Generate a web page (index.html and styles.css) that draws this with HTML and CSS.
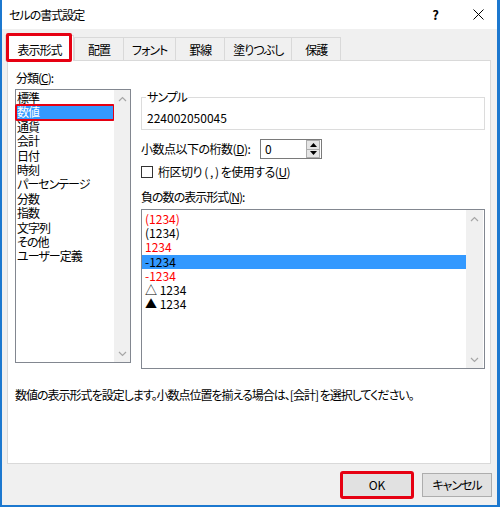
FILE: index.html
```html
<!DOCTYPE html>
<html lang="ja">
<head>
<meta charset="utf-8">
<title>セルの書式設定</title>
<link rel="stylesheet" href="styles.css">
</head>
<body>
<div class="window">
  <div class="titlebar">
    <span class="title">セルの書式設定</span>
    <span class="help">?</span>
    <span class="close">
      <svg width="11" height="11" viewBox="0 0 11 11"><path d="M0.5 0.5 L10.5 10.5 M10.5 0.5 L0.5 10.5" stroke="#000" stroke-width="1" fill="none"/></svg>
    </span>
  </div>

  <div class="tabs">
    <div class="tab tab-active">表示形式</div>
    <div class="tab">配置</div>
    <div class="tab">フォント</div>
    <div class="tab">罫線</div>
    <div class="tab">塗りつぶし</div>
    <div class="tab">保護</div>
  </div>

  <div class="panel">
    <div class="columns">
      <div class="category">
        <div class="label">分類(<u>C</u>):</div>
        <div class="listbox category-list">
          <ul class="items">
            <li>標準</li>
            <li class="selected marked">数値</li>
            <li>通貨</li>
            <li>会計</li>
            <li>日付</li>
            <li>時刻</li>
            <li>パーセンテージ</li>
            <li>分数</li>
            <li>指数</li>
            <li>文字列</li>
            <li>その他</li>
            <li>ユーザー定義</li>
          </ul>
          <div class="scrollbar">
            <svg width="9" height="6" viewBox="0 0 9 6"><path d="M1 5 L4.5 1.5 L8 5" stroke="#a6a6a6" stroke-width="1.2" fill="none"/></svg>
            <svg width="9" height="6" viewBox="0 0 9 6"><path d="M1 1 L4.5 4.5 L8 1" stroke="#a6a6a6" stroke-width="1.2" fill="none"/></svg>
          </div>
        </div>
      </div>

      <div class="options">
        <fieldset class="sample">
          <legend>サンプル</legend>
          <div class="sample-value">224002050045</div>
        </fieldset>

        <div class="decimal-row">
          <span class="decimal-label">小数点以下の桁数(<u>D</u>):</span>
          <div class="spin">
            <span class="spin-value">0</span>
            <div class="spin-buttons">
              <span class="spin-btn"><svg width="7" height="4" viewBox="0 0 7 4"><path d="M0 4 L3.5 0 L7 4 Z" fill="#000"/></svg></span>
              <span class="spin-btn"><svg width="7" height="4" viewBox="0 0 7 4"><path d="M0 0 L3.5 4 L7 0 Z" fill="#000"/></svg></span>
            </div>
          </div>
        </div>

        <div class="check-row">
          <span class="checkbox"></span>
          <span>桁区切り ( , ) を使用する(<u>U</u>)</span>
        </div>

        <div class="label neg-label">負の数の表示形式(<u>N</u>):</div>
        <div class="listbox neg-list">
          <ul class="items">
            <li class="red">(1234)</li>
            <li>(1234)</li>
            <li class="red">1234</li>
            <li class="selected plain">-1234</li>
            <li class="red">-1234</li>
            <li>△ 1234</li>
            <li>▲ 1234</li>
          </ul>
          <div class="scrollbar">
            <svg width="9" height="6" viewBox="0 0 9 6"><path d="M1 5 L4.5 1.5 L8 5" stroke="#a6a6a6" stroke-width="1.2" fill="none"/></svg>
            <svg width="9" height="6" viewBox="0 0 9 6"><path d="M1 1 L4.5 4.5 L8 1" stroke="#a6a6a6" stroke-width="1.2" fill="none"/></svg>
          </div>
        </div>
      </div>
    </div>

    <p class="description">数値の表示形式を設定します。小数点位置を揃える場合は、[会計] を選択してください。</p>
  </div>

  <div class="footer">
    <button class="btn btn-default">OK</button>
    <button class="btn">キャンセル</button>
  </div>
</div>
</body>
</html>
```

FILE: styles.css
```css
html, body {
  margin: 0;
  padding: 0;
  background: #ffffff;
}

body {
  font-family: "Noto Sans CJK JP", "Noto Sans", sans-serif;
  font-size: 12px;
  font-feature-settings: "palt";
  letter-spacing: -1px;
  color: #000;
}

u {
  text-decoration: underline;
  text-underline-offset: 1px;
}

/* dialog frame */
.window {
  width: 500px;
  height: 507px;
  box-sizing: border-box;
  border-left: 2px solid #1c78cf;
  border-right: 3px solid #1c78cf;
  border-bottom: 2px solid #1c78cf;
  background: #f0f0f0;
  display: flex;
  flex-direction: column;
}

.titlebar {
  height: 29px;
  flex: none;
  background: #fff;
  display: flex;
  align-items: center;
  padding-left: 7px;
  line-height: 14px;
}

.title {
  flex: 1;
}

.help {
  font-weight: bold;
  font-size: 13px;
  margin-right: 35px;
}

.close {
  display: flex;
  margin-right: 13px;
}

/* tab strip */
.tabs {
  height: 31px;
  flex: none;
  display: flex;
  align-items: flex-end;
  padding-left: 5px;
}

.tab {
  height: 23px;
  box-sizing: border-box;
  min-width: 50px;
  padding: 2px 8px 0;
  margin-left: -1px;
  border: 1px solid #d9d9d9;
  border-bottom: none;
  background: #f0f0f0;
  line-height: 19px;
  text-align: center;
}

.tab-active {
  position: relative;
  z-index: 2;
  width: 69px;
  height: 26px;
  margin-left: -2px;
  margin-bottom: -1px;
  padding-top: 4px;
  background: #fff;
}

.tab-active::after {
  content: "";
  position: absolute;
  top: -3px;
  left: 0;
  right: 1px;
  bottom: -1px;
  border: 3px solid #e60012;
  border-radius: 2px;
}

.tab-active + .tab {
  margin-left: 0;
}

/* tab page */
.panel {
  height: 404px;
  flex: none;
  box-sizing: border-box;
  margin: 0 6px 0 5px;
  padding: 10px 5px 0 7px;
  border: 1px solid #d9d9d9;
  background: #fff;
}

.columns {
  display: flex;
  gap: 10px;
}

.label {
  line-height: 14px;
}

.category {
  width: 116px;
  flex: none;
}

.category .label {
  padding-left: 1px;
}

.listbox {
  box-sizing: border-box;
  border: 1px solid #828790;
  background: #fff;
  display: flex;
}

.category-list {
  height: 274px;
  margin-top: 4px;
}

.items {
  list-style: none;
  margin: 0;
  padding: 1px 0 0;
  flex: 1;
  min-width: 0;
}

.items li {
  height: 14.4px;
  line-height: 14.4px;
  padding-left: 1px;
  white-space: nowrap;
}

.items li.selected {
  background: #3399ff;
  color: #fff;
}

.items li.marked {
  outline: 2px solid #e60012;
  outline-offset: -1px;
  border-radius: 1px;
}

.scrollbar {
  width: 16px;
  flex: none;
  background: #f0f0f0;
  display: flex;
  flex-direction: column;
  justify-content: space-between;
  align-items: center;
  padding: 6px 0 5px;
  box-sizing: border-box;
}

.options {
  width: 344px;
  flex: none;
}

.sample {
  margin: 19px 0 0;
  padding: 7px 4px 4px;
  border: 1px solid #dcdcdc;
  min-width: 0;
}

.sample legend {
  padding: 0 1px;
  line-height: 14px;
}

.sample-value {
  line-height: 14px;
  padding-left: 1px;
  letter-spacing: 0;
}

.decimal-row {
  margin-top: 9px;
  height: 20px;
  display: flex;
  align-items: center;
}

.decimal-label {
  width: 119px;
  flex: none;
  line-height: 14px;
  letter-spacing: -0.5px;
}

.spin {
  width: 62px;
  height: 20px;
  box-sizing: border-box;
  border: 1px solid #7a7a7a;
  display: flex;
}

.spin-value {
  flex: 1;
  padding-left: 4px;
  line-height: 18px;
  letter-spacing: 0;
}

.spin-buttons {
  width: 14px;
  margin: 0 1px 0 0;
  display: flex;
  flex-direction: column;
}

.spin-btn {
  flex: 1;
  box-sizing: border-box;
  border: 1px solid #adadad;
  background: #e5e5e5;
  display: flex;
  align-items: center;
  justify-content: center;
}

.spin-btn + .spin-btn {
  border-top: none;
}

.check-row {
  margin-top: 6px;
  height: 14px;
  line-height: 14px;
  display: flex;
  align-items: center;
  letter-spacing: -0.5px;
}

.checkbox {
  width: 12px;
  height: 12px;
  box-sizing: border-box;
  border: 1px solid #333;
  background: #fff;
  margin-right: 5px;
}

.neg-label {
  margin-top: 11px;
}

.neg-list {
  height: 160px;
  margin-top: 5px;
}

.neg-list .items {
  padding-top: 2px;
  letter-spacing: 0;
}

.neg-list .items li {
  height: 14.2px;
  line-height: 14.2px;
  padding-left: 3px;
}

.neg-list .items li.red {
  color: #ff0000;
}

.neg-list .items li.plain {
  color: #000;
}

.neg-list .scrollbar {
  width: 17px;
  margin-right: 1px;
}

.description {
  margin: 19px 0 0;
  line-height: 14px;
}

/* button row */
.footer {
  flex: 1;
  display: flex;
  justify-content: flex-end;
  align-items: flex-start;
  gap: 10px;
  padding: 9px 5px 0 0;
}

.btn {
  width: 70px;
  height: 24px;
  box-sizing: border-box;
  border: 1px solid #adadad;
  background: #e1e1e1;
  font: inherit;
  letter-spacing: inherit;
  color: #000;
  padding: 0;
  line-height: 20px;
}

.btn-default {
  letter-spacing: 0;
  border-color: #0078d7;
  outline: 3px solid #e60012;
  outline-offset: -1px;
  border-radius: 1px;
}
```
